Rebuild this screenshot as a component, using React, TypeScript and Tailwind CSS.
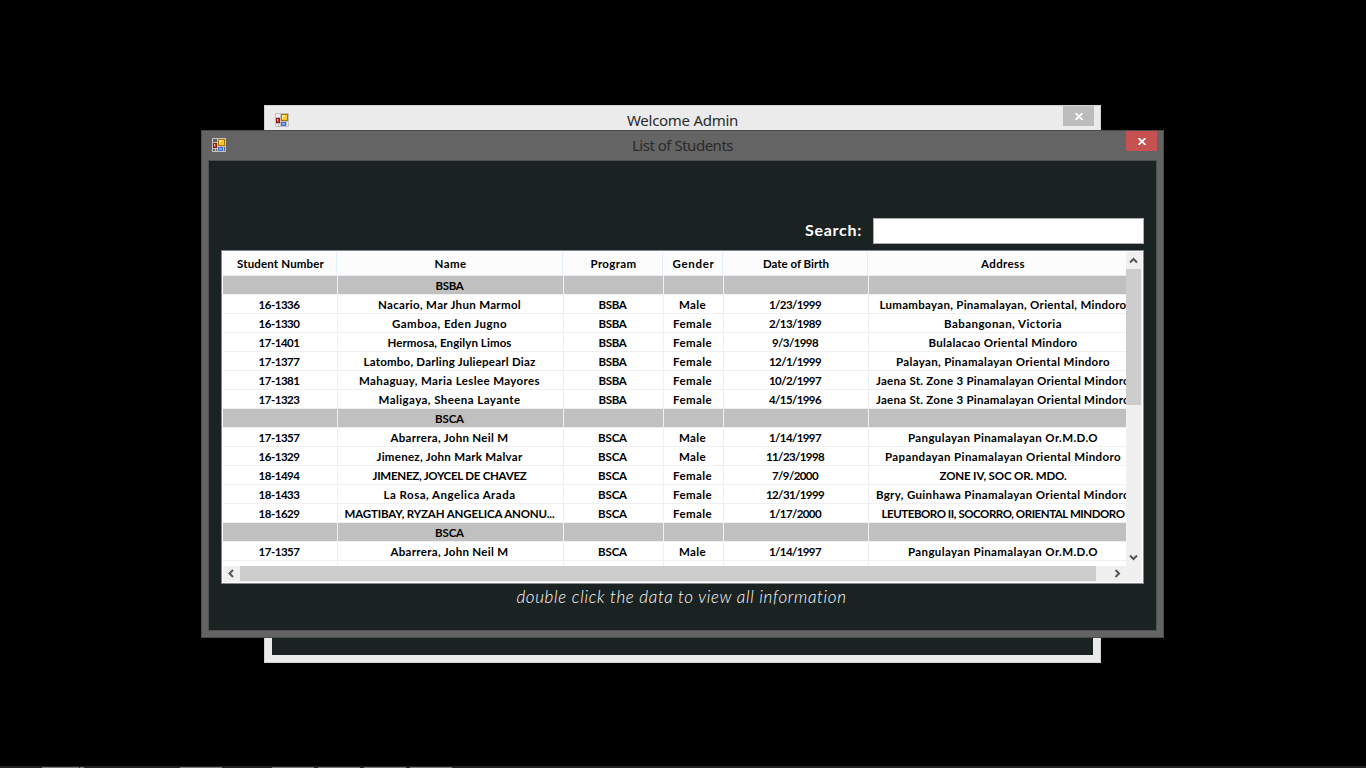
import { useLayoutEffect, useRef, useState } from "react";

type Label = [text: string, width: number];

/** Single-line text tracked so that it fills the given width. */
function Fit({ label, className = "" }: { label: Label; className?: string }) {
  const [text, width] = label;
  const ref = useRef<HTMLSpanElement>(null);
  const [spacing, setSpacing] = useState(0);
  useLayoutEffect(() => {
    const el = ref.current;
    if (!el) return;
    el.style.letterSpacing = "0px";
    const natural = el.getBoundingClientRect().width;
    const next = (width - natural) / text.length;
    el.style.letterSpacing = `${next}px`;
    setSpacing(next);
  }, [text, width]);
  return (
    <span ref={ref} className={`inline-block shrink-0 whitespace-pre ${className}`} style={{ letterSpacing: `${spacing}px` }}>
      {text}
    </span>
  );
}

function FormIcon() {
  return (
    <svg width="14" height="14" viewBox="0 0 14 14" shapeRendering="crispEdges" className="block">
      <path fill="#c3c3c3" fillRule="evenodd" d="M0 0h14v14H0zM1 1v3h4V1zM1 11v2h2v-2zM4 11v2h1v-2zM12 9v4h1V9z" />
      <path fill="#8f1a10" d="M1 5h4v5H1z" />
      <path fill="#d8402f" d="M2 6h2v3H2z" />
      <path fill="#f0a08c" d="M2 6h1v2H2z" />
      <path fill="#a87604" d="M6 1h7v7H6z" />
      <path fill="#fbc92e" d="M7 2h5v5H7z" />
      <path fill="#ffe48a" d="M7 2h3v2H8v2H7z" />
      <path fill="#3a6fd0" d="M6 9h5v4H6z" />
      <path fill="#79a8f5" d="M7 10h3v2H7z" />
    </svg>
  );
}

function CloseGlyph() {
  return (
    <svg width="8" height="7" viewBox="0 0 8 7" className="ml-px block">
      <path d="M.5 0 7.5 7M7.5 0 .5 7" stroke="#fff" strokeWidth="1.8" />
    </svg>
  );
}

function Chevron({ d }: { d: string }) {
  return (
    <svg width="9" height="9" viewBox="0 0 9 9" className="block">
      <path d={d} fill="none" stroke="#555" strokeWidth="2" />
    </svg>
  );
}

const COLS = "grid-cols-[115px_226px_100px_60px_145px_268px]";
const HEAD_COLS = "grid-cols-[114px_226px_100px_60px_145px_269px]";

const headers: Label[] = [
  ["Student Number", 87],
  ["Name", 32],
  ["Program", 46],
  ["Gender", 42],
  ["Date of Birth", 66],
  ["Address", 44],
];

const BSBA: Label = ["BSBA", 28];
const BSCA: Label = ["BSCA", 29];
const male: Label = ["Male", 27];
const female: Label = ["Female", 39];
const none: Label = ["", 0];
const group = (name: Label): Label[] => [none, name, none, none, none, none];
const id = (n: string): Label => [n, 41];

const abarrera: Label[] = [id("17-1357"), ["Abarrera, John Neil M", 118], BSCA, male, ["1/14/1997", 52], ["Pangulayan Pinamalayan Or.M.D.O", 190]];

const rows: Label[][] = [
  group(BSBA),
  [id("16-1336"), ["Nacario, Mar Jhun Marmol", 143], BSBA, male, ["1/23/1999", 52], ["Lumambayan, Pinamalayan, Oriental, Mindoro", 247]],
  [id("16-1330"), ["Gamboa, Eden Jugno", 115], BSBA, female, ["2/13/1989", 52], ["Babangonan, Victoria", 118]],
  [id("17-1401"), ["Hermosa, Engilyn Limos", 124], BSBA, female, ["9/3/1998", 46], ["Bulalacao Oriental Mindoro", 149]],
  [id("17-1377"), ["Latombo, Darling Juliepearl Diaz", 172], BSBA, female, ["12/1/1999", 52], ["Palayan, Pinamalayan Oriental Mindoro", 214]],
  [id("17-1381"), ["Mahaguay, Maria Leslee Mayores", 181], BSBA, female, ["10/2/1997", 52], ["Jaena St. Zone 3 Pinamalayan Oriental Mindoro", 254]],
  [id("17-1323"), ["Maligaya, Sheena Layante", 142], BSBA, female, ["4/15/1996", 52], ["Jaena St. Zone 3 Pinamalayan Oriental Mindoro", 254]],
  group(BSCA),
  abarrera,
  [id("16-1329"), ["Jimenez, John Mark Malvar", 146], BSCA, male, ["11/23/1998", 58], ["Papandayan Pinamalayan Oriental Mindoro", 236]],
  [id("18-1494"), ["JIMENEZ, JOYCEL DE CHAVEZ", 154], BSCA, female, ["7/9/2000", 46], ["ZONE IV, SOC OR. MDO.", 127]],
  [id("18-1433"), ["La Rosa, Angelica Arada", 132], BSCA, female, ["12/31/1999", 58], ["Bgry, Guinhawa Pinamalayan Oriental Mindoro", 254]],
  [id("18-1629"), ["MAGTIBAY, RYZAH ANGELICA ANONU...", 210], BSCA, female, ["1/17/2000", 52], ["LEUTEBORO II, SOCORRO, ORIENTAL MINDORO", 243]],
  group(BSCA),
  abarrera,
  [none, none, none, none, none, none],
];

function StudentTable() {
  return (
    <div className="flex h-[334px] w-[923px] flex-col border border-[#828790] bg-white p-px text-[11.5px] font-bold text-black">
      <div className="flex h-[314px]">
        <div className="w-[903px] shrink-0 overflow-hidden">
          <div className={`grid h-6 border-b border-[#e8ecf4] bg-[#fcfcfc] ${HEAD_COLS}`}>
            {headers.map((h) => (
              <div key={h[0]} className="flex items-center justify-center border-r border-[#e5effa] pl-[2px]">
                <Fit label={h} className="leading-4" />
              </div>
            ))}
          </div>
          {rows.map((row, i) => {
            const isGroup = row[0] === none && row[1] !== none;
            return (
              <div key={i} className={`grid h-[19px] ${COLS} ${isGroup ? "bg-[#c0c0c0]" : "bg-white"}`}>
                {row.map((cell, j) => (
                  <div
                    key={j}
                    className={`flex h-[19px] items-center justify-center overflow-hidden border-r border-b border-[#f0f0f0] pt-px ${j < 5 ? "pr-[2px]" : "pl-px"}`}
                  >
                    {cell !== none && <Fit label={cell} className="leading-4" />}
                  </div>
                ))}
              </div>
            );
          })}
        </div>
        <div className="flex w-4 shrink-0 flex-col bg-[#f0f0f0]">
          <div className="flex h-[17px] items-center pl-[3px]">
            <Chevron d="M1 6.5 4.5 3 8 6.5" />
          </div>
          <div className="mr-px h-[136px] bg-[#cdcdcd]" />
          <div className="mt-auto flex h-[17px] items-center pl-[3px]">
            <Chevron d="M1 2.5 4.5 6 8 2.5" />
          </div>
        </div>
        <div className="w-px bg-[#f0f0f0]" />
      </div>
      <div className="flex h-4 items-stretch bg-[#f0f0f0]">
        <div className="flex w-[17px] items-start justify-center pt-[3px]">
          <Chevron d="M6 1 2.5 4.5 6 8" />
        </div>
        <div className="mb-px w-[856px] bg-[#cdcdcd]" />
        <div className="ml-[13px] flex w-[17px] items-start justify-center pt-[3px]">
          <Chevron d="M2.5 1 6 4.5 2.5 8" />
        </div>
      </div>
    </div>
  );
}

function AdminWindow() {
  return (
    <section className="absolute top-[105px] left-[264px] flex h-[558px] w-[837px] flex-col border border-[#d2d2d2] bg-[#ebebeb] px-[7px] pb-[7px]">
      <header className="flex h-[30px] shrink-0 items-start">
        <div className="ml-[3px] pt-[7px]">
          <FormIcon />
        </div>
        <h2 className="flex flex-1 justify-center pt-[4px] pl-[13px] text-[15px] leading-[20px] text-[#2a2a2a]">
          <Fit label={["Welcome Admin", 111]} />
        </h2>
        <button aria-label="Close" className="-mr-px flex h-5 w-[31px] items-center justify-center bg-[#bcbcbc]">
          <CloseGlyph />
        </button>
      </header>
      <div className="flex-1 bg-[#1b2222]" />
    </section>
  );
}

function StudentsWindow() {
  return (
    <section className="absolute top-[130px] left-[201px] flex h-[508px] w-[963px] flex-col border border-[#4b4b4b] bg-[#646464] px-[6px] pb-[6px]">
      <header className="flex h-[29px] shrink-0 items-start">
        <div className="ml-[4px] pt-[7px]">
          <FormIcon />
        </div>
        <h1 className="flex flex-1 justify-center pt-[4px] pl-[13px] text-[15px] leading-[20px] text-[#2a2a2a]">
          <Fit label={["List of Students", 101]} />
        </h1>
        <button aria-label="Close" className="flex h-5 w-[31px] items-center justify-center bg-[#c75050]">
          <CloseGlyph />
        </button>
      </header>
      <div className="flex flex-1 flex-col border border-[#505050] bg-[#1b2222] px-3 font-[Lato,sans-serif]">
        <div className="mt-[57px] flex h-[26px] items-center justify-end">
          <label htmlFor="search" className="mr-[11px] pb-[2px] text-[16px] leading-5 font-bold text-white">
            <Fit label={["Search:", 57]} />
          </label>
          <input id="search" className="h-[26px] w-[271px] border border-[#abadb3] bg-white outline-none" />
        </div>
        <div className="mt-[6px]">
          <StudentTable />
        </div>
        <p className="mt-[2px] flex justify-center pr-[2px] text-[17px] leading-[22px] font-light text-white italic">
          <Fit label={["double click the data to view all information", 330]} />
        </p>
      </div>
    </section>
  );
}

export default function App() {
  return (
    <main className="relative flex h-[768px] w-[1366px] flex-col justify-end overflow-hidden bg-black font-['Noto_Sans',sans-serif]">
      <AdminWindow />
      <StudentsWindow />
      <footer className="flex h-0.5 items-end bg-[#222] *:h-px *:bg-[#757575]">
        <i className="ml-[42px] w-[37px]" />
        <i className="ml-px w-1" />
        <i className="ml-24 w-[42px]" />
        <i className="ml-[50px] w-[42px]" />
        <i className="ml-1 w-[42px]" />
        <i className="ml-1 w-[42px]" />
        <i className="ml-1 w-[42px]" />
      </footer>
    </main>
  );
}
